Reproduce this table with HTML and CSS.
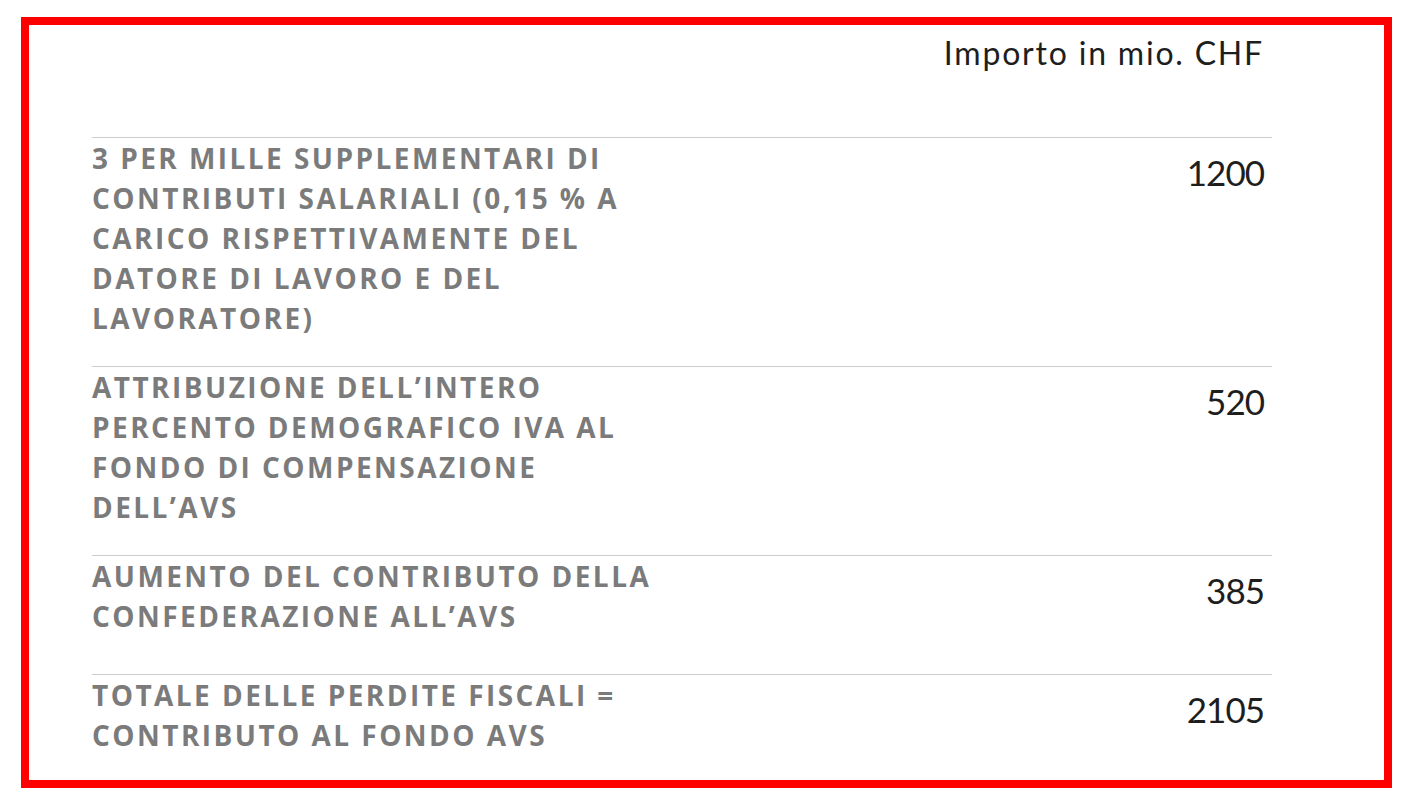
FILE: index.html
```html
<!DOCTYPE html>
<html lang="it">
<head>
  <meta charset="UTF-8">
  <meta name="viewport" content="width=device-width, initial-scale=1.0">
  <title>Contributo al fondo AVS</title>
  <link rel="stylesheet" href="styles.css">
</head>
<body>

  <div class="frame">
    <table class="avs">
      <thead>
        <tr>
          <th class="label"></th>
          <th class="amount">Importo in mio. CHF</th>
        </tr>
      </thead>
      <tbody>
        <tr>
          <td class="label">3 per mille supplementari di contributi salariali (0,15 % a carico rispettivamente del datore di lavoro e del lavoratore)</td>
          <td class="amount">1200</td>
        </tr>
        <tr>
          <td class="label">Attribuzione dell’intero percento demografico IVA al Fondo di compensazione dell’AVS</td>
          <td class="amount">520</td>
        </tr>
        <tr>
          <td class="label">Aumento del contributo della Confederazione all’AVS</td>
          <td class="amount">385</td>
        </tr>
        <tr>
          <td class="label">Totale delle perdite fiscali = contributo al Fondo AVS</td>
          <td class="amount">2105</td>
        </tr>
      </tbody>
    </table>
  </div>

</body>
</html>
```

FILE: styles.css
```css
body {
  margin: 0;
  background: #fff;
  font-family: Lato, "Open Sans", sans-serif;
}
.frame {
  box-sizing: border-box;
  width: 1371px;
  height: 771px;
  margin: 17px 0 0 21px;
  border: 8px solid #f00;
  padding: 0 112px 0 63px;
  overflow: hidden;
}
.avs {
  width: 100%;
  border-collapse: collapse;
}
th, td {
  vertical-align: top;
}
th.amount {
  font-size: 32px;
  font-weight: normal;
  line-height: 40px;
  letter-spacing: 1.8px;
  color: #1e1e1e;
  text-align: right;
  padding: 8px 8px 64px 0;
}
th.label {
  width: 50%;
}
tbody tr {
  border-top: 1px solid #cdcdcd;
}
td.label {
  font-family: "Open Sans", sans-serif;
  font-size: 28px;
  font-weight: bold;
  line-height: 40px;
  letter-spacing: 2.45px;
  text-transform: uppercase;
  color: #7b7b7b;
  padding: 0 0 28px 0;
}
td.amount {
  font-size: 35px;
  line-height: 50px;
  letter-spacing: -1px;
  color: #1e1e1e;
  text-align: right;
  padding: 9px 8px 59px 0;
}
```
